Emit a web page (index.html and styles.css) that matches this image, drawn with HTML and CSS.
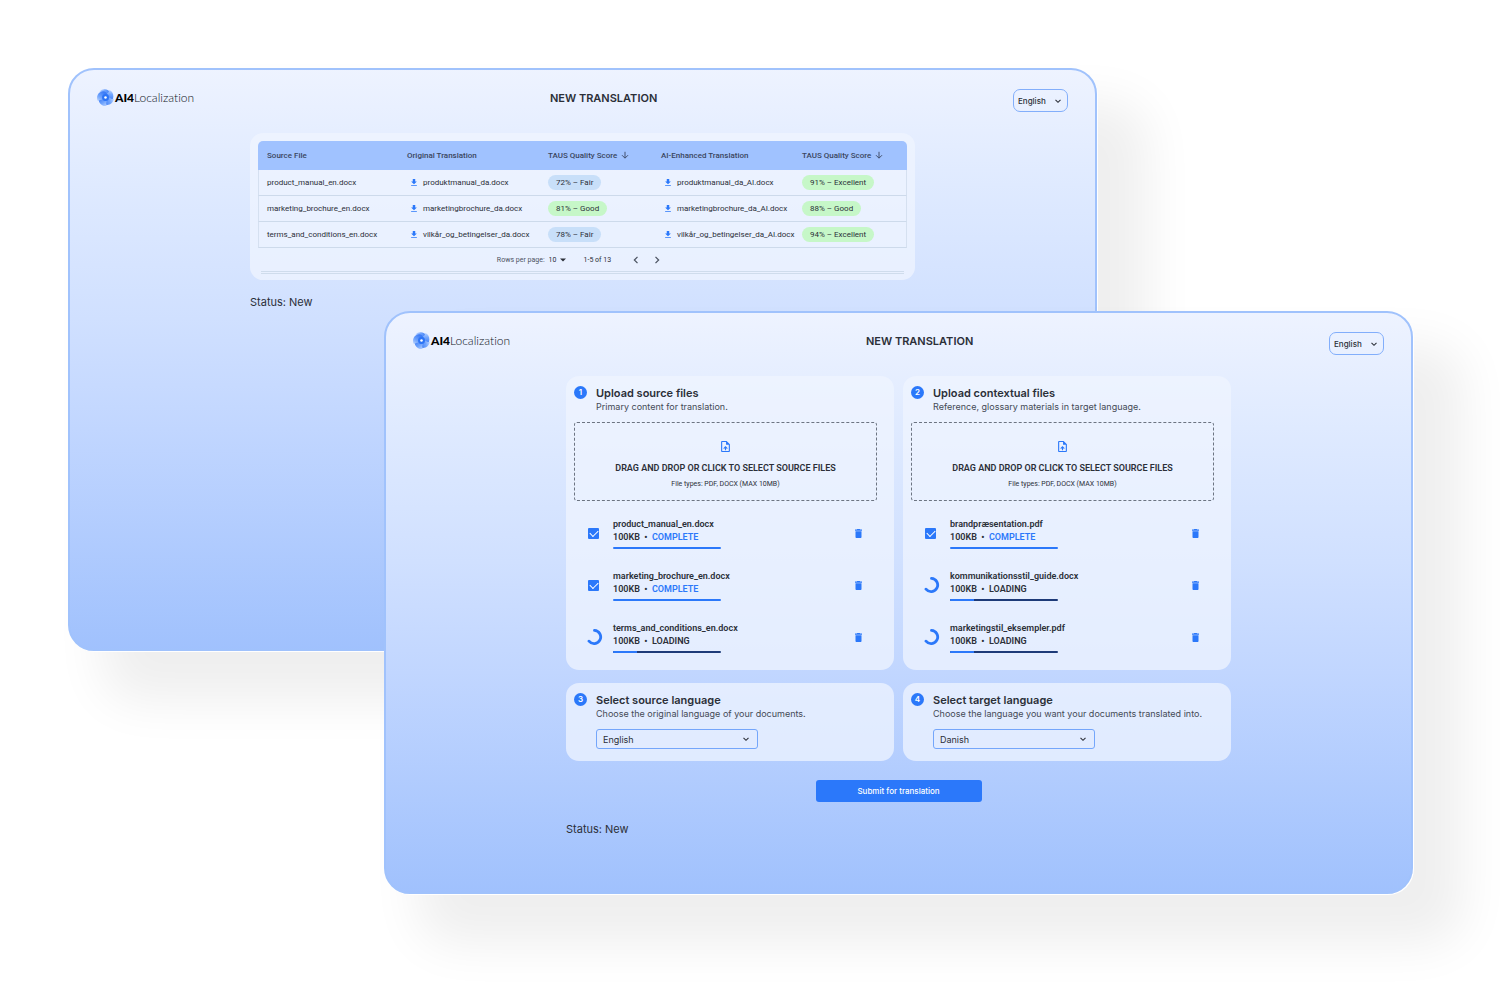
FILE: index.html
```html
<!DOCTYPE html>
<html lang="en">
<head>
  <meta charset="UTF-8" />
  <meta name="viewport" content="width=device-width, initial-scale=1.0" />
  <title>AI4Localization - New Translation</title>
  <link rel="stylesheet" href="styles.css">
</head>
<body>
  <!-- shared icons -->
  <svg class="sprite" width="0" height="0" aria-hidden="true">
    <defs>
      <linearGradient id="blade-fill" gradientUnits="userSpaceOnUse" x1="4" y1="4" x2="30" y2="12">
        <stop offset="0" stop-color="#c4daff" />
        <stop offset="0.5" stop-color="#5c98fd" />
        <stop offset="1" stop-color="#1f68f5" />
      </linearGradient>
      <path id="blade" d="M6 6 C14 -3 28 0 32 10 C34 16 31 21 25 24 C27 18 25 12 19 12 C16 12 14 14 13 16 C12 11 10 8 6 6 Z" />
    </defs>
    <symbol id="icon-logo" viewBox="0 0 40 40">
      <g fill="url(#blade-fill)" opacity="0.85">
        <use href="#blade" />
        <use href="#blade" transform="rotate(72 20 20)" />
        <use href="#blade" transform="rotate(144 20 20)" />
        <use href="#blade" transform="rotate(216 20 20)" />
        <use href="#blade" transform="rotate(288 20 20)" />
      </g>
      <circle cx="20" cy="20" r="8" fill="#2c74f6" />
      <circle cx="20" cy="20" r="3" fill="#fff" />
    </symbol>
    <symbol id="icon-chevron" viewBox="0 0 8 8">
      <path d="M1.5 2.8 L4 5.3 L6.5 2.8" fill="none" stroke="currentColor" stroke-width="1.1" />
    </symbol>
    <symbol id="icon-caret" viewBox="0 0 8 8">
      <path d="M1 2.5 H7 L4 5.5 Z" fill="currentColor" />
    </symbol>
    <symbol id="icon-sort" viewBox="0 0 8 8">
      <path d="M4 0.8 V7 M1 4.2 L4 7.2 L7 4.2" fill="none" stroke="currentColor" stroke-width="0.9" />
    </symbol>
    <symbol id="icon-download" viewBox="0 0 14 17">
      <path d="M4 0 H10 V6 H14 L7 13 L0 6 H4 Z M0 15 H14 V17 H0 Z" fill="currentColor" />
    </symbol>
    <symbol id="icon-prev" viewBox="0 0 8 8">
      <path d="M5.2 1.5 L2.7 4 L5.2 6.5" fill="none" stroke="currentColor" stroke-width="1" />
    </symbol>
    <symbol id="icon-next" viewBox="0 0 8 8">
      <path d="M2.8 1.5 L5.3 4 L2.8 6.5" fill="none" stroke="currentColor" stroke-width="1" />
    </symbol>
    <symbol id="icon-upload" viewBox="0 0 16 20">
      <path d="M10 0 H2 C0.9 0 0 0.9 0 2 V18 C0 19.1 0.9 20 2 20 H14 C15.1 20 16 19.1 16 18 V6 Z M14 18 H2 V2 H9 V7 H14 Z M4 13 L5.4 14.4 L7 12.9 V17 H9 V12.9 L10.6 14.4 L12 13 L8 9 Z" fill="currentColor" fill-rule="evenodd" />
    </symbol>
    <symbol id="icon-trash" viewBox="0 0 14 18">
      <path d="M1 16 C1 17.1 1.9 18 3 18 H11 C12.1 18 13 17.1 13 16 V4.4 H1 Z M14 1 H10.5 L9.5 0 H4.5 L3.5 1 H0 V3.4 H14 Z" fill="currentColor" />
    </symbol>
    <symbol id="icon-spinner" viewBox="0 0 16 16">
      <path d="M7.5 1.4 A6.6 6.6 0 1 1 2 12.2" fill="none" stroke="currentColor" stroke-width="2.8" stroke-linecap="round" />
    </symbol>
  </svg>

  <main class="stage">
    <section class="window window-back">
      <header class="topbar">
        <a class="logo" href="#"><svg class="logo-mark"><use href="#icon-logo" /></svg><span><b>AI4</b>Localization</span></a>
        <h1>NEW TRANSLATION</h1>
        <div class="select select-locale">
          <select aria-label="Interface language"><option>English</option></select>
          <svg class="chevron"><use href="#icon-chevron" /></svg>
        </div>
      </header>

      <div class="content">
        <div class="card results">
          <table>
            <colgroup>
              <col class="col-source"><col class="col-file"><col class="col-score"><col class="col-file"><col>
            </colgroup>
            <thead>
              <tr>
                <th>Source File</th>
                <th>Original Translation</th>
                <th>TAUS Quality Score <svg class="sort"><use href="#icon-sort" /></svg></th>
                <th>AI-Enhanced Translation</th>
                <th>TAUS Quality Score <svg class="sort"><use href="#icon-sort" /></svg></th>
              </tr>
            </thead>
            <tbody>
              <tr>
                <td>product_manual_en.docx</td>
                <td><a class="download" href="#"><svg><use href="#icon-download" /></svg>produktmanual_da.docx</a></td>
                <td><span class="pill pill-fair">72% – Fair</span></td>
                <td><a class="download" href="#"><svg><use href="#icon-download" /></svg>produktmanual_da_AI.docx</a></td>
                <td><span class="pill pill-good">91% – Excellent</span></td>
              </tr>
              <tr>
                <td>marketing_brochure_en.docx</td>
                <td><a class="download" href="#"><svg><use href="#icon-download" /></svg>marketingbrochure_da.docx</a></td>
                <td><span class="pill pill-good">81% – Good</span></td>
                <td><a class="download" href="#"><svg><use href="#icon-download" /></svg>marketingbrochure_da_AI.docx</a></td>
                <td><span class="pill pill-good">88% – Good</span></td>
              </tr>
              <tr>
                <td>terms_and_conditions_en.docx</td>
                <td><a class="download" href="#"><svg><use href="#icon-download" /></svg>vilkår_og_betingelser_da.docx</a></td>
                <td><span class="pill pill-fair">78% – Fair</span></td>
                <td><a class="download" href="#"><svg><use href="#icon-download" /></svg>vilkår_og_betingelser_da_AI.docx</a></td>
                <td><span class="pill pill-good">94% – Excellent</span></td>
              </tr>
            </tbody>
          </table>
          <div class="pagination">
            <label for="rows">Rows per page:</label>
            <div class="select select-rows">
              <select id="rows"><option>10</option></select>
              <svg class="chevron"><use href="#icon-caret" /></svg>
            </div>
            <span class="range">1-5 of 13</span>
            <button type="button" aria-label="Previous page"><svg><use href="#icon-prev" /></svg></button>
            <button type="button" aria-label="Next page"><svg><use href="#icon-next" /></svg></button>
          </div>
        </div>
        <p class="status">Status: New</p>
      </div>
    </section>

    <section class="window window-front">
      <header class="topbar">
        <a class="logo" href="#"><svg class="logo-mark"><use href="#icon-logo" /></svg><span><b>AI4</b>Localization</span></a>
        <h1>NEW TRANSLATION</h1>
        <div class="select select-locale">
          <select aria-label="Interface language"><option>English</option></select>
          <svg class="chevron"><use href="#icon-chevron" /></svg>
        </div>
      </header>

      <form class="content">
        <div class="steps">
          <div class="card step">
            <span class="badge">1</span>
            <div class="step-title">
              <h2>Upload source files</h2>
              <p>Primary content for translation.</p>
            </div>
            <button type="button" class="dropzone">
              <svg><use href="#icon-upload" /></svg>
              <strong>DRAG AND DROP OR CLICK TO SELECT SOURCE FILES</strong>
              <small>File types: PDF, DOCX (MAX 10MB)</small>
            </button>
            <ul class="files">
              <li>
                <input type="checkbox" id="file-1" checked>
                <label class="file" for="file-1">
                  <span>product_manual_en.docx</span>
                  <span>100KB &nbsp;•&nbsp; <em>COMPLETE</em></span>
                  <span class="bar"><i style="width: 100%"></i></span>
                </label>
                <button type="button" class="trash" aria-label="Delete"><svg><use href="#icon-trash" /></svg></button>
              </li>
              <li>
                <input type="checkbox" id="file-2" checked>
                <label class="file" for="file-2">
                  <span>marketing_brochure_en.docx</span>
                  <span>100KB &nbsp;•&nbsp; <em>COMPLETE</em></span>
                  <span class="bar"><i style="width: 100%"></i></span>
                </label>
                <button type="button" class="trash" aria-label="Delete"><svg><use href="#icon-trash" /></svg></button>
              </li>
              <li>
                <svg class="spinner"><use href="#icon-spinner" /></svg>
                <div class="file">
                  <span>terms_and_conditions_en.docx</span>
                  <span>100KB &nbsp;•&nbsp; LOADING</span>
                  <span class="bar"><i style="width: 22%"></i></span>
                </div>
                <button type="button" class="trash" aria-label="Delete"><svg><use href="#icon-trash" /></svg></button>
              </li>
            </ul>
          </div>

          <div class="card step">
            <span class="badge">2</span>
            <div class="step-title">
              <h2>Upload contextual files</h2>
              <p>Reference, glossary materials in target language.</p>
            </div>
            <button type="button" class="dropzone">
              <svg><use href="#icon-upload" /></svg>
              <strong>DRAG AND DROP OR CLICK TO SELECT SOURCE FILES</strong>
              <small>File types: PDF, DOCX (MAX 10MB)</small>
            </button>
            <ul class="files">
              <li>
                <input type="checkbox" id="file-3" checked>
                <label class="file" for="file-3">
                  <span>brandpræsentation.pdf</span>
                  <span>100KB &nbsp;•&nbsp; <em>COMPLETE</em></span>
                  <span class="bar"><i style="width: 100%"></i></span>
                </label>
                <button type="button" class="trash" aria-label="Delete"><svg><use href="#icon-trash" /></svg></button>
              </li>
              <li>
                <svg class="spinner"><use href="#icon-spinner" /></svg>
                <div class="file">
                  <span>kommunikationsstil_guide.docx</span>
                  <span>100KB &nbsp;•&nbsp; LOADING</span>
                  <span class="bar"><i style="width: 22%"></i></span>
                </div>
                <button type="button" class="trash" aria-label="Delete"><svg><use href="#icon-trash" /></svg></button>
              </li>
              <li>
                <svg class="spinner"><use href="#icon-spinner" /></svg>
                <div class="file">
                  <span>marketingstil_eksempler.pdf</span>
                  <span>100KB &nbsp;•&nbsp; LOADING</span>
                  <span class="bar"><i style="width: 22%"></i></span>
                </div>
                <button type="button" class="trash" aria-label="Delete"><svg><use href="#icon-trash" /></svg></button>
              </li>
            </ul>
          </div>

          <div class="card step">
            <span class="badge">3</span>
            <div class="step-title">
              <h2><label for="source-lang">Select source language</label></h2>
              <p>Choose the original language of your documents.</p>
              <div class="select select-lang">
                <select id="source-lang"><option>English</option></select>
                <svg class="chevron"><use href="#icon-chevron" /></svg>
              </div>
            </div>
          </div>

          <div class="card step">
            <span class="badge">4</span>
            <div class="step-title">
              <h2><label for="target-lang">Select target language</label></h2>
              <p>Choose the language you want your documents translated into.</p>
              <div class="select select-lang">
                <select id="target-lang"><option>Danish</option></select>
                <svg class="chevron"><use href="#icon-chevron" /></svg>
              </div>
            </div>
          </div>
        </div>
        <button type="button" class="submit">Submit for translation</button>
        <p class="status">Status: New</p>
      </form>
    </section>
  </main>
</body>
</html>
```

FILE: styles.css
```css
* {
  box-sizing: border-box;
}
body {
  margin: 0;
  background-color: #fff;
  color: #2b2f38;
  font-family: Inter, sans-serif;
}
h1, h2, p, ul {
  margin: 0;
  padding: 0;
}
button, select {
  font: inherit;
  color: inherit;
  margin: 0;
  padding: 0;
  border: none;
  background: none;
  cursor: pointer;
}
a {
  color: inherit;
  text-decoration: none;
}
svg {
  display: block;
  flex: none;
}
.sprite {
  position: absolute;
}

/* two overlapping windows */
.stage {
  display: grid;
  grid-template-columns: 316px 1fr 316px;
  grid-template-rows: 243px minmax(340px, auto) 243px;
  padding: 68px 87px 93px 68px;
  overflow: hidden;
}
.window {
  padding: 19px 27px;
  border: 2px solid #a0c2fc;
  border-radius: 26px;
  background: linear-gradient(#eef3ff, #dfeaff 20%, #d0e0ff 43%, #c1d6ff 62%, #a0c1fd) border-box;
  box-shadow: 1px 1px 0 #fff, 42px 42px 50px 8px rgba(0, 0, 0, 0.065);
}
.window-back {
  grid-column: 1 / 3;
  grid-row: 1 / 3;
}
.window-front {
  grid-column: 2 / 4;
  grid-row: 2 / 4;
}

.topbar {
  display: flex;
  justify-content: space-between;
  align-items: flex-start;
  margin-bottom: 21px;
}
.logo {
  display: flex;
  align-items: center;
  gap: 1px;
  height: 16px;
  font-family: Lato, sans-serif;
  font-size: 12px;
  font-weight: 300;
  font-variant-ligatures: none;
  color: #10141c;
}
.logo b {
  color: #000;
  font-weight: 900;
}
.logo-mark {
  width: 17px;
  height: 17px;
}
.topbar h1 {
  font-size: 11px;
  line-height: 18px;
  font-weight: 600;
}

/* native select with its arrow in the same grid cell */
.select {
  display: grid;
  align-items: center;
}
.select select {
  grid-area: 1 / 1;
  width: 100%;
  height: 100%;
  appearance: none;
}
.select .chevron {
  grid-area: 1 / 1;
  justify-self: end;
  width: 8px;
  height: 8px;
  pointer-events: none;
}
.select-locale {
  width: 55px;
  height: 23px;
  font-size: 8px;
  font-weight: 500;
}
.select-locale select {
  padding-left: 4px;
  border: 1px solid #82aefb;
  border-radius: 7px;
}
.select-locale .chevron {
  margin-right: 6px;
}

.content {
  max-width: 665px;
  margin: 0 auto;
}
.card {
  border-radius: 13px;
  background-color: rgba(239, 244, 255, 0.75);
}
.status {
  font-size: 11px;
  line-height: 16px;
}

/* results table */
.results {
  padding: 8px 8px 6px;
  margin-bottom: 14px;
  font-family: Roboto, sans-serif;
}
.results table {
  width: 100%;
  table-layout: fixed;
  border-spacing: 0;
  font-size: 8px;
}
.col-source {
  width: 140px;
}
.col-file {
  width: 141px;
}
.col-score {
  width: 113px;
}
.results th {
  height: 29px;
  padding: 0 0 0 9px;
  background-color: #a0c2ff;
  color: #3a4660;
  font-weight: 500;
  text-align: left;
  white-space: nowrap;
}
.results th:first-child {
  border-radius: 5px 0 0 0;
}
.results th:last-child {
  border-radius: 0 5px 0 0;
}
.results td {
  height: 26px;
  padding: 0 0 0 9px;
  border-bottom: 1px solid #cddaeb;
  white-space: nowrap;
}
.results td:first-child {
  border-left: 1px solid #d5e0f0;
  padding-left: 8px;
}
.results td:last-child {
  border-right: 1px solid #d5e0f0;
}
.sort {
  display: inline-block;
  width: 8px;
  height: 8px;
  margin-left: 2px;
  vertical-align: -1px;
}
.download {
  display: flex;
  align-items: center;
  gap: 6px;
  padding-left: 4px;
}
.download svg {
  width: 6px;
  height: 7px;
  color: #2b78fa;
}
.pill {
  display: inline-block;
  padding: 0 8px;
  border-radius: 8px;
  line-height: 15px;
}
.pill-fair {
  background-color: #c8dff9;
}
.pill-good {
  background-color: #c6f7c8;
}
.pagination {
  display: flex;
  align-items: center;
  justify-content: center;
  height: 26px;
  margin: 0 3px;
  border-bottom: 3px double #cfdcec;
  font-size: 7px;
  color: #4b5361;
}
.select-rows {
  width: 18px;
  height: 12px;
  margin: 0 17px 0 4px;
  color: #2b2f38;
}
.range {
  margin-right: 20px;
  color: #2b2f38;
}
.pagination button {
  margin-right: 11px;
}
.pagination button:last-child {
  margin-right: 6px;
}
.pagination button svg {
  width: 10px;
  height: 10px;
}

/* steps */
.steps {
  display: grid;
  grid-template-columns: 1fr 1fr;
  gap: 13px 9px;
}
.step {
  display: grid;
  grid-template-columns: 13px 1fr;
  column-gap: 9px;
  align-content: start;
  padding: 10px 17px 12px 8px;
}
.badge {
  width: 13px;
  height: 13px;
  border-radius: 50%;
  background-color: #2b78fa;
  color: #fff;
  font-size: 8px;
  line-height: 13px;
  font-weight: 600;
  text-align: center;
}
.step h2 {
  font-size: 11px;
  line-height: 14px;
  font-weight: 600;
}
.step p {
  font-size: 9px;
  line-height: 14px;
  color: #444a56;
}
.dropzone {
  grid-column: 1 / -1;
  display: flex;
  flex-direction: column;
  align-items: center;
  height: 79px;
  margin-top: 8px;
  padding-top: 18px;
  border: 1px dashed #6c7482;
  border-radius: 3px;
  font-family: Roboto, sans-serif;
}
.dropzone svg {
  width: 9px;
  height: 11px;
  color: #2b78fa;
}
.dropzone strong {
  margin-top: 8px;
  font-size: 9px;
  line-height: 16px;
  font-weight: 600;
}
.dropzone small {
  font-size: 7px;
  line-height: 16px;
}
.files {
  grid-column: 1 / -1;
  padding: 6px 15px 0 14px;
  margin-bottom: -5px;
  list-style: none;
  font-family: Roboto, sans-serif;
}
.files li {
  display: flex;
  align-items: center;
  height: 52px;
}
.files input {
  appearance: none;
  display: grid;
  place-items: center;
  width: 11px;
  height: 11px;
  margin: 0 14px 0 0;
  border-radius: 1px;
  background-color: #2b78fa;
}
.files input::before {
  content: "";
  width: 7px;
  height: 4px;
  margin-bottom: 2px;
  border-left: 1px solid #fff;
  border-bottom: 1px solid #fff;
  transform: rotate(-45deg);
}
.spinner {
  width: 16px;
  height: 16px;
  margin: 0 10px 0 -1px;
  color: #2b78fa;
}
.file {
  display: flex;
  flex-direction: column;
  flex: 1;
  font-size: 9px;
  line-height: 13px;
  font-weight: 600;
}
.file em {
  color: #2b78fa;
  font-style: normal;
}
.bar {
  display: flex;
  width: 108px;
  height: 2px;
  margin-top: 3px;
  border-radius: 1px;
  background-color: #1d3a78;
  overflow: hidden;
}
.bar i {
  background-color: #2b78fa;
}
.trash svg {
  width: 7px;
  height: 9px;
  color: #2b78fa;
}
.select-lang {
  width: 162px;
  height: 20px;
  margin-top: 8px;
  font-size: 9px;
}
.select-lang select {
  padding-left: 6px;
  border: 1px solid #74a6fb;
  border-radius: 3px;
}
.select-lang .chevron {
  margin-right: 8px;
}
.submit {
  display: block;
  width: 166px;
  height: 22px;
  margin: 19px auto 19px;
  border-radius: 3px;
  background-color: #2b78fa;
  color: #fff;
  font-size: 8px;
  font-weight: 500;
}
```
